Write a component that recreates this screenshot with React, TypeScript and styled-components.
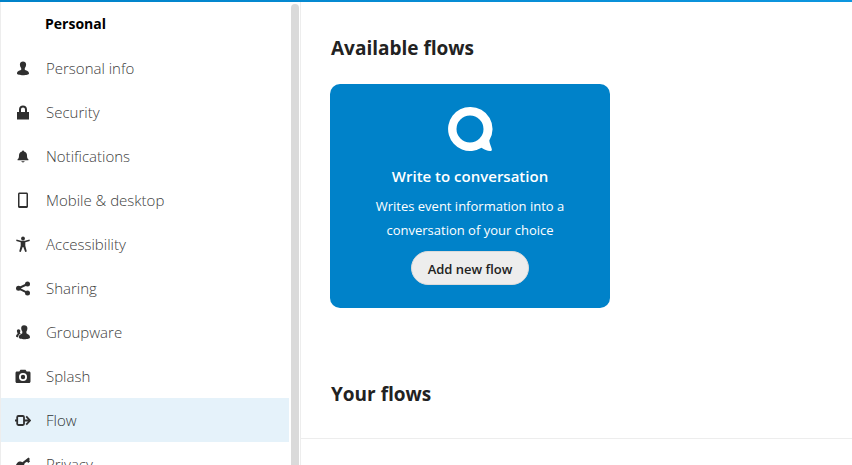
import React from "react";
import styled, { createGlobalStyle } from "styled-components";

const GlobalStyle = createGlobalStyle`
  * { box-sizing: border-box; }
  body {
    margin: 0;
    background: #fff;
    color: #222;
    font-family: "Open Sans", "Noto Sans", sans-serif;
    font-size: 14px;
  }
`;

const Page = styled.div`
  height: 100vh;
  display: flex;
  flex-direction: column;
  overflow: hidden;
`;

const TopBar = styled.header`
  flex: 0 0 2px;
  background: linear-gradient(90deg, #0082c9, #0d96df);
`;

const Body = styled.div`
  flex: 1;
  min-height: 0;
  display: flex;
`;

const Sidebar = styled.nav`
  flex: 0 0 301px;
  display: flex;
  overflow: hidden;
  border-left: 1px solid #ededed;
  border-right: 1px solid #ededed;
`;

const NavList = styled.ul`
  flex: 1;
  margin: 0;
  padding: 0;
  list-style: none;
`;

const NavCaption = styled.li`
  padding-left: 44px;
  color: #000;
  font-weight: 700;
  line-height: 44px;
`;

const NavLink = styled.a<{ $active?: boolean }>`
  display: flex;
  align-items: center;
  gap: 15px;
  height: 44px;
  padding-left: 14px;
  background: ${(p) => (p.$active ? "#e5f2fa" : "transparent")};
  color: ${(p) => (p.$active ? "#303538" : "#404040")};
  font-size: 15px;
  font-weight: 300;
  text-decoration: none;
`;

const Icon = styled.svg`
  flex: none;
  width: 16px;
  height: 16px;
  color: #2f2f2f;
`;

const ScrollTrack = styled.div`
  flex: 0 0 10px;
  margin-left: 1px;
  padding: 2px 1px 0;
`;

const ScrollThumb = styled.div`
  height: 100%;
  border-radius: 4px 4px 0 0;
  background: #dadada;
`;

const Content = styled.main`
  flex: 1;
  min-width: 0;
`;

const Section = styled.section`
  padding: 30px 29px 28px;
  border-bottom: 1px solid #ededed;
`;

const Heading = styled.h2`
  margin: 0;
  padding-left: 1px;
  font-size: 19px;
  font-weight: 700;
  line-height: 32px;
`;

const FlowCard = styled.article`
  width: 280px;
  max-width: 100%;
  min-height: 224px;
  margin: 20px 0 70px;
  padding: 20px 40px;
  display: flex;
  flex-direction: column;
  align-items: center;
  border-radius: 10px;
  background: #0082c9;
  color: #fff;
  text-align: center;
`;

const TalkLogo = styled.svg`
  width: 50px;
  height: 50px;
`;

const CardTitle = styled.h3`
  margin: 10px 0 6px;
  font-size: 15px;
  font-weight: 600;
  line-height: 24px;
`;

const CardText = styled.p`
  margin: 0;
  font-size: 13px;
  line-height: 24px;
`;

const AddButton = styled.button`
  height: 34px;
  margin-top: 9px;
  padding: 2px 16px 0;
  border: 1px solid #dbdbdb;
  border-radius: 17px;
  background: #ededed;
  color: #222;
  font-family: inherit;
  font-size: 13px;
  font-weight: 600;
  white-space: nowrap;
`;

const items: { label: string; icon: React.ReactNode; active?: boolean }[] = [
  {
    label: "Personal info",
    icon: (
      <path
        fill="currentColor"
        d="M8 1.500C6.200 1.500 4.900 2.600 4.900 4.300c0 1.500.5 2.900 1.300 3.900v1.600C5.600 10.600 2 10.700 2 13.500 2 14.800 5 15.200 8 15.200s6-.4 6-1.700c0-2.800-3.600-2.900-4.200-3.700V8.200c.8-1 1.300-2.400 1.300-3.900C11.100 2.600 9.800 1.500 8 1.500z"
      />
    ),
  },
  {
    label: "Security",
    icon: (
      <path
        fill="currentColor"
        fillRule="evenodd"
        d="M8 1.500C5.700 1.500 4 3.200 4 5.400V8H2v7.500h12V8h-2V5.400c0-2.200-1.700-3.900-4-3.900zm0 2c1.200 0 2 .8 2 1.900V8H6V5.400c0-1.100.8-1.900 2-1.900z"
      />
    ),
  },
  {
    label: "Notifications",
    icon: (
      <path
        fill="currentColor"
        d="M8 2.500c-.6 0-1 .4-1 .9-2 .5-3 2-3 4 0 2.300-.5 3.100-1.300 3.800-.4.400-.2 1.100.3 1.100h10c.5 0 .7-.7.3-1.100-.8-.7-1.300-1.500-1.300-3.800 0-2-1-3.500-3-4 0-.5-.4-.9-1-.9zM6.300 13.300c.2.700.9 1.100 1.700 1.100s1.500-.4 1.700-1.100z"
      />
    ),
  },
  {
    label: "Mobile & desktop",
    icon: (
      <path
        fill="currentColor"
        fillRule="evenodd"
        d="M4.500 0.500h7c.8 0 1.500.7 1.500 1.500v12.500c0 .8-.7 1.500-1.500 1.500h-7C3.700 16 3 15.300 3 14.500V2C3 1.200 3.700.5 4.500.5zM4.500 2v12h7V2z"
      />
    ),
  },
  {
    label: "Accessibility",
    icon: (
      <>
        <circle cx="8" cy="2.500" r="1.900" fill="currentColor" />
        <path
          fill="currentColor"
          d="M1.500 3.600 6 4.800h4l4.500-1.200.3 1.400L10.300 6.300v3.500l1.500 5.800-1.600.4L8.300 11h-.6l-1.900 5-1.600-.4 1.500-5.800V6.300L1.200 5z"
        />
      </>
    ),
  },
  {
    label: "Sharing",
    icon: (
      <>
        <path d="M12.500 4 3.500 8.300l9 4.500" fill="none" stroke="currentColor" strokeWidth="2" />
        <g fill="currentColor">
          <circle cx="12.500" cy="4" r="2.500" />
          <circle cx="3.500" cy="8.300" r="2.500" />
          <circle cx="12.500" cy="12.900" r="2.500" />
        </g>
      </>
    ),
  },
  {
    label: "Groupware",
    icon: (
      <g fill="currentColor">
        <path d="M9 1.300C7.200 1.300 6.200 2.500 6.200 4.100c0 1.500.5 2.700 1.100 3.500v1.700c-.5.800-3.500 1.200-3.500 4 0 1.400 2.700 1.900 5.600 1.900s5.600-.5 5.600-1.900c0-2.800-3.100-3.200-3.600-4V7.600c.6-.8 1-2 1-3.500C12.400 2.500 11.200 1.300 9 1.300z" />
        <path d="M3.500 5.300c-1.100 0-1.600.8-1.600 1.800 0 .8.200 1.400.6 1.900v1C2 10.500 1 10.800 1 12.300c0 .7.900 1 2 1 .2-2 1.500-3 3-3.700-.3-.3-.9-.4-1-.6v-.7c.2-.4.300-.8.300-1.300 0-1-.7-1.700-1.800-1.700z" />
      </g>
    ),
  },
  {
    label: "Splash",
    icon: (
      <path
        fill="currentColor"
        fillRule="evenodd"
        d="M5.500 1.800 4.300 3.500H2C1 3.500.5 4.200.5 5v8.500c0 .8.600 1.500 1.500 1.500h12c.9 0 1.500-.7 1.500-1.500V5c0-.8-.5-1.500-1.500-1.500h-2.300l-1.200-1.700zM8 5a4 4 0 1 1 0 8 4 4 0 0 1 0-8zM8 6.800a2.200 2.200 0 1 0 0 4.400 2.200 2.200 0 0 0 0-4.400z"
      />
    ),
  },
  {
    label: "Flow",
    active: true,
    icon: (
      <g fill="none" stroke="currentColor" strokeWidth="1.800">
        <rect x="2.200" y="4" width="6.800" height="9" rx="1.200" />
        <path d="M0 8.500h2.200M9 8.500h6M11.200 4.300l3.900 4.200-3.900 4.200" />
      </g>
    ),
  },
  {
    label: "Privacy",
    icon: (
      <path
        fill="currentColor"
        fillRule="evenodd"
        d="M13.500 1.500 15 3l-1 1 1.100 1.200-1.800 1.800-1.200-1.200-1.500.8-1.500 1.500c.7 1.600.3 3.500-1 4.800-1.800 1.600-4.400 1.600-6 0s-1.600-4.300.1-6C3.600 5.500 5.800 5.200 7.400 6.200zM4.800 9a1.400 1.400 0 1 0 0 2.800 1.400 1.400 0 0 0 0-2.800z"
      />
    ),
  },
];

export default function App() {
  return (
    <>
      <GlobalStyle />
      <Page>
        <TopBar />
        <Body>
          <Sidebar aria-label="Settings">
            <NavList>
              <NavCaption>Personal</NavCaption>
              {items.map((item) => (
                <li key={item.label}>
                  <NavLink href="#" $active={item.active} aria-current={item.active ? "page" : undefined}>
                    <Icon viewBox="0 0 16 16" aria-hidden="true">
                      {item.icon}
                    </Icon>
                    {item.label}
                  </NavLink>
                </li>
              ))}
            </NavList>
            <ScrollTrack>
              <ScrollThumb />
            </ScrollTrack>
          </Sidebar>
          <Content>
            <Section>
              <Heading>Available flows</Heading>
              <FlowCard>
                <TalkLogo viewBox="0 0 50 50" aria-hidden="true">
                  <path
                    fill="#fff"
                    fillRule="evenodd"
                    d="M25 3a22 22 0 1 0 11.500 40.800c2.700 1.800 6.500 3.500 9.300 3.200 1.700-.3 1-2 .5-3.500-.8-2.300-1.800-4.700-2-7A22 22 0 0 0 25 3zm0 8.500a13.500 13.500 0 1 1 0 27 13.500 13.500 0 0 1 0-27z"
                  />
                </TalkLogo>
                <CardTitle>Write to conversation</CardTitle>
                <CardText>Writes event information into a conversation of your choice</CardText>
                <AddButton type="button">Add new flow</AddButton>
              </FlowCard>
              <Heading>Your flows</Heading>
            </Section>
          </Content>
        </Body>
      </Page>
    </>
  );
}
